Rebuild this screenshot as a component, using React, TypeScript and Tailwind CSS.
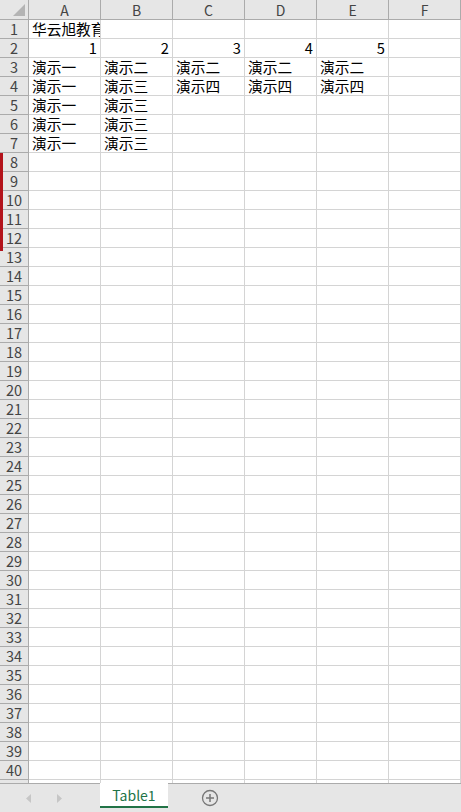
import React from 'react';

const COLS = ['A', 'B', 'C', 'D', 'E', 'F'];

type Cell = string | number | null;

const DATA: Cell[][] = [
    ['华云旭教育', null, null, null, null, null],
    [1, 2, 3, 4, 5, null],
    ['演示一', '演示二', '演示二', '演示二', '演示二', null],
    ['演示一', '演示三', '演示四', '演示四', '演示四', null],
    ['演示一', '演示三', null, null, null, null],
    ['演示一', '演示三', null, null, null, null],
    ['演示一', '演示三', null, null, null, null],
];

const ROW_COUNT = 41;

const font = { fontFamily: '"Noto Sans CJK SC", "Liberation Sans", sans-serif' };

function CornerCell() {
    return (
        <div className="relative border-r border-b border-[#ababab] bg-[#e6e6e6]">
            <svg className="absolute right-[3px] bottom-[3px]" width="12" height="12" viewBox="0 0 12 12">
                <polygon points="12,0 12,12 0,12" fill="#b4b4b4" />
            </svg>
        </div>
    );
}

export default function App() {
    const rows = Array.from({ length: ROW_COUNT }, (_, i) => i + 1);

    return (
        <div className="flex h-[812px] w-[461px] flex-col overflow-hidden bg-white" style={font}>
            <div className="relative flex-1 overflow-hidden">
                <div className="grid grid-cols-[29px_repeat(6,72px)] grid-rows-[20px_repeat(41,19px)]">
                    <CornerCell />
                    {COLS.map((c) => (
                        <div
                            key={c}
                            className="flex items-center justify-center border-r border-b border-[#ababab] bg-[#e6e6e6] text-[14px] leading-[18px] text-[#444]"
                        >
                            {c}
                        </div>
                    ))}
                    {rows.map((r) => (
                        <React.Fragment key={r}>
                            <div className="flex items-center justify-center border-r border-b border-[#ababab] bg-[#e6e6e6] text-[14.5px] leading-[18px] text-[#444]">
                                {r}
                            </div>
                            {COLS.map((c, ci) => {
                                const v = DATA[r - 1]?.[ci] ?? null;
                                const isNum = typeof v === 'number';
                                // A1 is clipped at the column edge, like the reference
                                const clip = r === 1 && ci === 0;
                                return (
                                    <div
                                        key={c}
                                        className={`flex items-center whitespace-nowrap border-r border-b border-[#d4d4d4] text-[14.7px] leading-[18px] text-black ${
                                            isNum ? 'justify-end pr-[3px]' : 'justify-start pl-[3px]'
                                        } ${clip ? 'overflow-hidden' : ''}`}
                                    >
                                        {v}
                                    </div>
                                );
                            })}
                        </React.Fragment>
                    ))}
                </div>
                {/* red row marker */}
                <div className="absolute left-0 top-[153px] h-[98px] w-[3px] bg-[#b3131b]" />
            </div>

            <div className="flex h-[29px] shrink-0 items-stretch border-t border-[#ababab] bg-[#e6e6e6]">
                <div className="flex w-[100px] items-center gap-[24px] pl-[26px]">
                    <svg width="6" height="9" viewBox="0 0 6 9">
                        <polygon points="5,0 5,9 0,4.5" fill="#c6c6c6" />
                    </svg>
                    <svg width="6" height="9" viewBox="0 0 6 9">
                        <polygon points="1,0 1,9 6,4.5" fill="#c6c6c6" />
                    </svg>
                </div>
                <div className="-mt-px flex h-[25px] w-[68px] items-center justify-center border-b-2 border-[#217346] bg-white text-[14px] leading-[18px] text-[#217346]">
                    Table1
                </div>
                <div className="flex flex-1 items-center pl-[33px]">
                    <svg width="18" height="18" viewBox="0 0 18 18">
                        <circle cx="9" cy="9" r="7.5" fill="none" stroke="#777" strokeWidth="1.3" />
                        <path d="M9 5v8M5 9h8" stroke="#777" strokeWidth="1.5" />
                    </svg>
                </div>
            </div>
        </div>
    );
}
